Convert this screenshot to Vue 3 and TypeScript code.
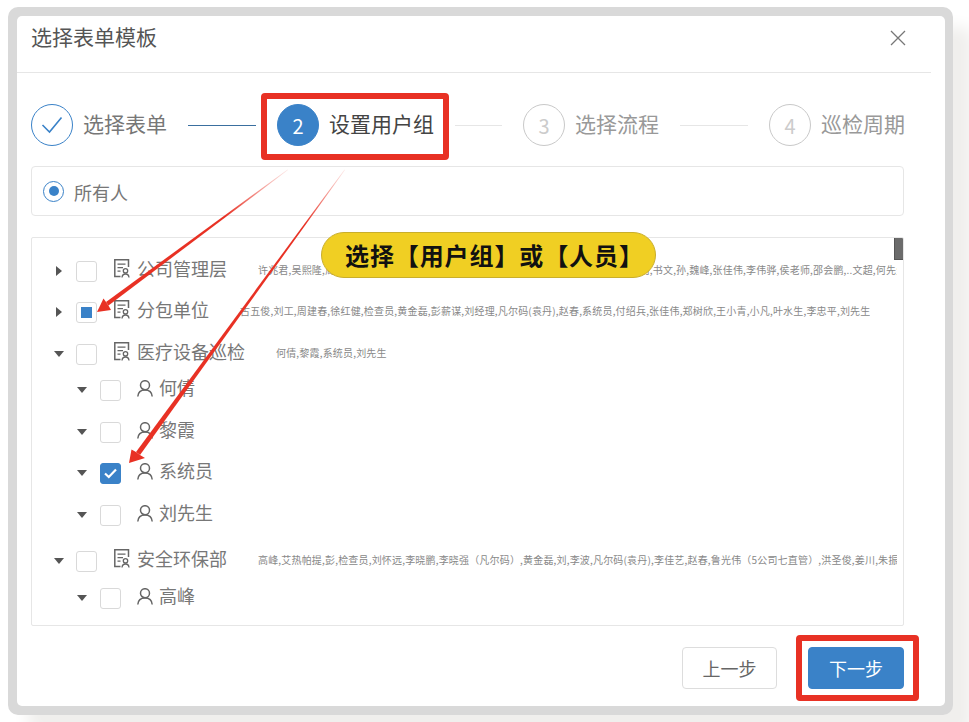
<script setup lang="ts">
interface Step { label: string; mark: string; state: 'done' | 'active' | 'todo'; lineActive?: boolean }
interface Row {
  name: string
  kind: 'group' | 'person'
  open: boolean
  check?: 'none' | 'partial' | 'full'
  members?: string
  memberGap?: number
  height: number
}

const steps: Step[] = [
  { label: '选择表单', mark: '', state: 'done', lineActive: true },
  { label: '设置用户组', mark: '2', state: 'active' },
  { label: '选择流程', mark: '3', state: 'todo' },
  { label: '巡检周期', mark: '4', state: 'todo' },
]

const rows: Row[] = [
  { name: '公司管理层', kind: 'group', open: false, memberGap: 31, height: 41, members: '许兆君,吴熙隆,周建春,徐红健,检查员,黄金磊,彭薪谋,刘经理,凡尔码,赵春,付绍兵,小凡,何,书文,孙,魏峰,张佳伟,李伟骅,侯老师,邵会鹏,..文超,何先生' },
  { name: '分包单位', kind: 'group', open: false, check: 'partial', memberGap: 31, height: 42, members: '古五俊,刘工,周建春,徐红健,检查员,黄金磊,彭薪谋,刘经理,凡尔码(袁丹),赵春,系统员,付绍兵,张佳伟,郑树欣,王小青,小凡,叶水生,李忠平,刘先生' },
  { name: '医疗设备巡检', kind: 'group', open: true, memberGap: 31, height: 36, members: '何倩,黎霞,系统员,刘先生' },
  { name: '何倩', kind: 'person', open: true, height: 42 },
  { name: '黎霞', kind: 'person', open: true, height: 41 },
  { name: '系统员', kind: 'person', open: true, check: 'full', height: 42 },
  { name: '刘先生', kind: 'person', open: true, height: 46 },
  { name: '安全环保部', kind: 'group', open: true, memberGap: 31, height: 37, members: '高峰,艾热帕提,彭,检查员,刘怀远,李晓鹏,李晓强（凡尔码）,黄金磊,刘,李波,凡尔码(袁丹),李佳艺,赵春,鲁光伟（5公司七直管）,洪圣俊,姜川,朱振华' },
  { name: '高峰', kind: 'person', open: true, height: 30 },
]
</script>

<template>
  <div class="page">
    <div class="frame">
      <div class="dialog">
        <header class="head">
          <h1 class="title">选择表单模板</h1>
          <svg class="close" width="16" height="16" viewBox="0 0 16 16" aria-label="关闭">
            <path d="M1 1 15 15M15 1 1 15" stroke="#777" stroke-width="1.3" fill="none" />
          </svg>
        </header>

        <div class="body">
          <ol class="steps">
            <li v-for="(s, i) in steps" :key="s.label" class="step" :class="s.state">
              <span class="mark">
                <svg v-if="s.state === 'done'" width="22" height="18" viewBox="0 0 22 18">
                  <path d="M1.500 9 8.500 16 20.500 1.500" fill="none" stroke="#3a82c8" stroke-width="1.600" />
                </svg>
                <template v-else>{{ s.mark }}</template>
              </span>
              <span class="step-label">{{ s.label }}</span>
              <span v-if="i < steps.length - 1" class="link" :class="{ on: s.lineActive }"></span>
            </li>
          </ol>

          <div class="everyone">
            <span class="radio"><i></i></span>
            <span class="everyone-label">所有人</span>
          </div>

          <div class="tree">
            <span class="thumb"></span>
            <div
              v-for="r in rows"
              :key="r.name"
              class="row"
              :class="r.kind"
              :style="{ height: r.height + 'px' }"
            >
              <span class="caret" :class="{ open: r.open }"></span>
              <span class="check" :class="r.check">
                <svg v-if="r.check === 'full'" width="13" height="11" viewBox="0 0 13 11">
                  <path d="M1 5.500 4.800 9 12 1.500" fill="none" stroke="#fff" stroke-width="2.200" />
                </svg>
                <i v-if="r.check === 'partial'"></i>
              </span>
              <svg v-if="r.kind === 'group'" class="ico" width="16" height="19" viewBox="0 0 16 19">
                <path d="M6.500 17.500H.8V.8H14.500V8" fill="none" stroke="#666" stroke-width="1.500" />
                <path d="M3.500 5.200h8M3.500 8.700h5.500M3.500 12.200h3" stroke="#666" stroke-width="1.300" fill="none" />
                <circle cx="11.500" cy="11.800" r="2.200" fill="none" stroke="#666" stroke-width="1.300" />
                <path d="M8 18.500c.2-2.300 1.500-3.500 3.500-3.500s3.300 1.200 3.500 3.500" fill="none" stroke="#666" stroke-width="1.300" />
              </svg>
              <svg v-else class="ico" width="16" height="17" viewBox="0 0 16 17">
                <circle cx="8" cy="5.200" r="4.500" fill="none" stroke="#666" stroke-width="1.500" />
                <path d="M.8 16.500c.3-4 3-6.500 7.200-6.500s6.900 2.500 7.200 6.500" fill="none" stroke="#666" stroke-width="1.500" />
              </svg>
              <span class="name">{{ r.name }}</span>
              <span v-if="r.members" class="members" :style="{ marginLeft: r.memberGap + 'px' }">{{ r.members }}</span>
            </div>
          </div>

          <footer class="foot">
            <button class="btn">上一步</button>
            <button class="btn primary">下一步</button>
          </footer>
        </div>
      </div>
    </div>

    <div class="callout">选择【用户组】或【人员】</div>
    <span class="box box-step"></span>
    <span class="box box-next"></span>

    <svg class="arrows" width="969" height="722" viewBox="0 0 969 722">
      <defs>
        <linearGradient id="fadeA" gradientUnits="userSpaceOnUse" x1="288" y1="170" x2="225" y2="217">
          <stop offset="0" stop-color="#e83124" stop-opacity="0.1" />
          <stop offset="1" stop-color="#e83124" />
        </linearGradient>
        <linearGradient id="fadeB" gradientUnits="userSpaceOnUse" x1="345" y1="170" x2="305" y2="224">
          <stop offset="0" stop-color="#e83124" stop-opacity="0.1" />
          <stop offset="1" stop-color="#e83124" />
        </linearGradient>
      </defs>
      <path fill="url(#fadeA)" d="M288 170 108.500 305.500 106 302 287.500 169.500Z" />
      <path fill="#e83124" d="M97 312 103.500 298.500 106 302 108.500 305.500 111 310Z" />
      <path fill="url(#fadeB)" d="M345 170 140 455 136 452 344.500 169.500Z" />
      <path fill="#e83124" d="M129 463 131.500 449.500 136 452 140 455 145 458Z" />
    </svg>
  </div>
</template>

<style>
html, body { margin: 0; background: #fff; }
</style>

<style scoped>
.page {
  position: relative;
  width: 969px;
  height: 722px;
  overflow: hidden;
  box-sizing: border-box;
  padding: 7px 0 0 8px;
  font-family: "Noto Sans CJK SC", "Liberation Sans", sans-serif;
  background: #fff;
}
.frame {
  width: 945px;
  height: 708px;
  box-sizing: border-box;
  padding: 9px 8px 9px 9px;
  background: #d9d9d9;
  border-radius: 10px;
  box-shadow: 20px 20px 16px #f0efed;
}
.dialog { height: 100%; background: #fff; border-radius: 5px; }
.head {
  height: 56px;
  margin-right: 14px;
  padding: 0 25px 0 14px;
  border-bottom: 1px solid #e6e6e6;
  display: flex;
  justify-content: space-between;
  align-items: flex-start;
}
.title { margin: 5px 0 0; font-size: 21px; line-height: 30px; font-weight: 400; color: #555; }
.close { margin-top: 14px; }
.body { padding: 0 41px 0 14px; }
.steps {
  list-style: none;
  margin: 0;
  padding: 31px 0 0;
  height: 62px;
  display: flex;
  align-items: flex-start;
}
.step { display: flex; align-items: center; height: 42px; flex: none; width: 246px; }
.step:last-child { width: auto; }
.mark {
  width: 42px;
  height: 42px;
  flex: none;
  box-sizing: border-box;
  border-radius: 50%;
  border: 1px solid #c9c9c9;
  color: #ccc;
  display: flex;
  align-items: center;
  justify-content: center;
  font-size: 20px;
}
.step-label {
  margin-left: 10px;
  padding-bottom: 5px;
  font-size: 21px;
  line-height: 30px;
  color: #999;
  white-space: nowrap;
}
.step.done .mark { border-color: #3a82c8; }
.step.done .step-label { color: #777; }
.step.active .mark { background: #3a82c8; border-color: #3a82c8; color: #fff; }
.step.active .step-label { color: #444; }
.link { flex: 1; height: 1px; margin: 0 21px; background: #e6e6e6; }
.link.on { background: #3a6f9f; }
.everyone {
  height: 50px;
  box-sizing: border-box;
  border: 1px solid #e6e6e6;
  border-radius: 4px;
  padding-left: 11px;
  display: flex;
  align-items: center;
  gap: 10px;
  font-size: 18px;
  color: #777;
}
.everyone-label { padding-top: 1px; }
.radio {
  width: 21px;
  height: 21px;
  box-sizing: border-box;
  border: 1px solid #3a82c8;
  border-radius: 50%;
  display: flex;
  align-items: center;
  justify-content: center;
}
.radio i { width: 10px; height: 10px; border-radius: 50%; background: #3a82c8; }
.tree {
  position: relative;
  margin-top: 21px;
  height: 389px;
  box-sizing: border-box;
  border: 1px solid #e6e6e6;
  border-radius: 2px;
  padding-top: 23px;
  overflow: hidden;
}
.thumb {
  position: absolute;
  top: -1px;
  right: -1px;
  width: 8px;
  height: 21px;
  background: #6b6b6b;
  border: 1px solid #555;
}
.row { display: flex; align-items: flex-start; padding: 0 6px 0 22px; white-space: nowrap; }
.row.person { padding-left: 45px; }
.caret {
  width: 0;
  height: 0;
  flex: none;
  margin-top: 5px;
  margin-right: 14px;
  margin-left: 2px;
  border-left: 6px solid #555;
  border-top: 5px solid transparent;
  border-bottom: 5px solid transparent;
}
.caret.open {
  margin-top: 7px;
  margin-right: 12px;
  margin-left: 0;
  border-top: 6px solid #555;
  border-bottom: 0;
  border-left: 5px solid transparent;
  border-right: 5px solid transparent;
}
.person .caret.open { margin-right: 13px; }
.check {
  width: 21px;
  height: 21px;
  flex: none;
  box-sizing: border-box;
  border: 1px solid #d9d9d9;
  border-radius: 3px;
  display: flex;
  align-items: center;
  justify-content: center;
  background: #fff;
}
.check.full { background: #3a82c8; border-color: #3a82c8; }
.check i { width: 11px; height: 11px; background: #3a82c8; }
.ico { flex: none; margin: -2px 0 0 17px; }
.person .ico { margin: 0 0 0 16px; }
.name { margin: -4px 0 0 7px; font-size: 18px; line-height: 22px; color: #777; flex: none; }
.person .name { margin-left: 6px; }
.members {
  margin-top: -1px;
  font-size: 10px;
  line-height: 20px;
  letter-spacing: 0.18px;
  color: #888;
  flex: 0 1 auto;
  min-width: 0;
  overflow: hidden;
}
.foot {
  display: flex;
  justify-content: flex-end;
  gap: 31px;
  padding-top: 21px;
}
.btn {
  width: 96px;
  height: 42px;
  box-sizing: border-box;
  border: 1px solid #ddd;
  border-radius: 4px;
  background: #fff;
  color: #666;
  font: inherit;
  font-size: 18px;
  padding: 0;
}
.btn:first-child { width: 95px; }
.btn.primary { background: #3a82c8; border-color: #3a82c8; color: #fff; }
.callout {
  position: absolute;
  left: 321px;
  top: 232px;
  width: 335px;
  height: 46px;
  box-sizing: border-box;
  padding-left: 23px;
  border: 1px solid #c9ae2c;
  border-radius: 23px;
  background: #f0cf23;
  color: #111;
  font-size: 24px;
  font-weight: 700;
  letter-spacing: 0.9px;
  line-height: 44px;
  white-space: nowrap;
}
.box {
  position: absolute;
  box-sizing: border-box;
  border: 6px solid #e83124;
  border-radius: 4px;
}
.box-step { left: 261px; top: 93px; width: 188px; height: 67px; }
.box-next { left: 796px; top: 635px; width: 123px; height: 66px; }
.arrows { position: absolute; left: 0; top: 0; pointer-events: none; }
</style>
